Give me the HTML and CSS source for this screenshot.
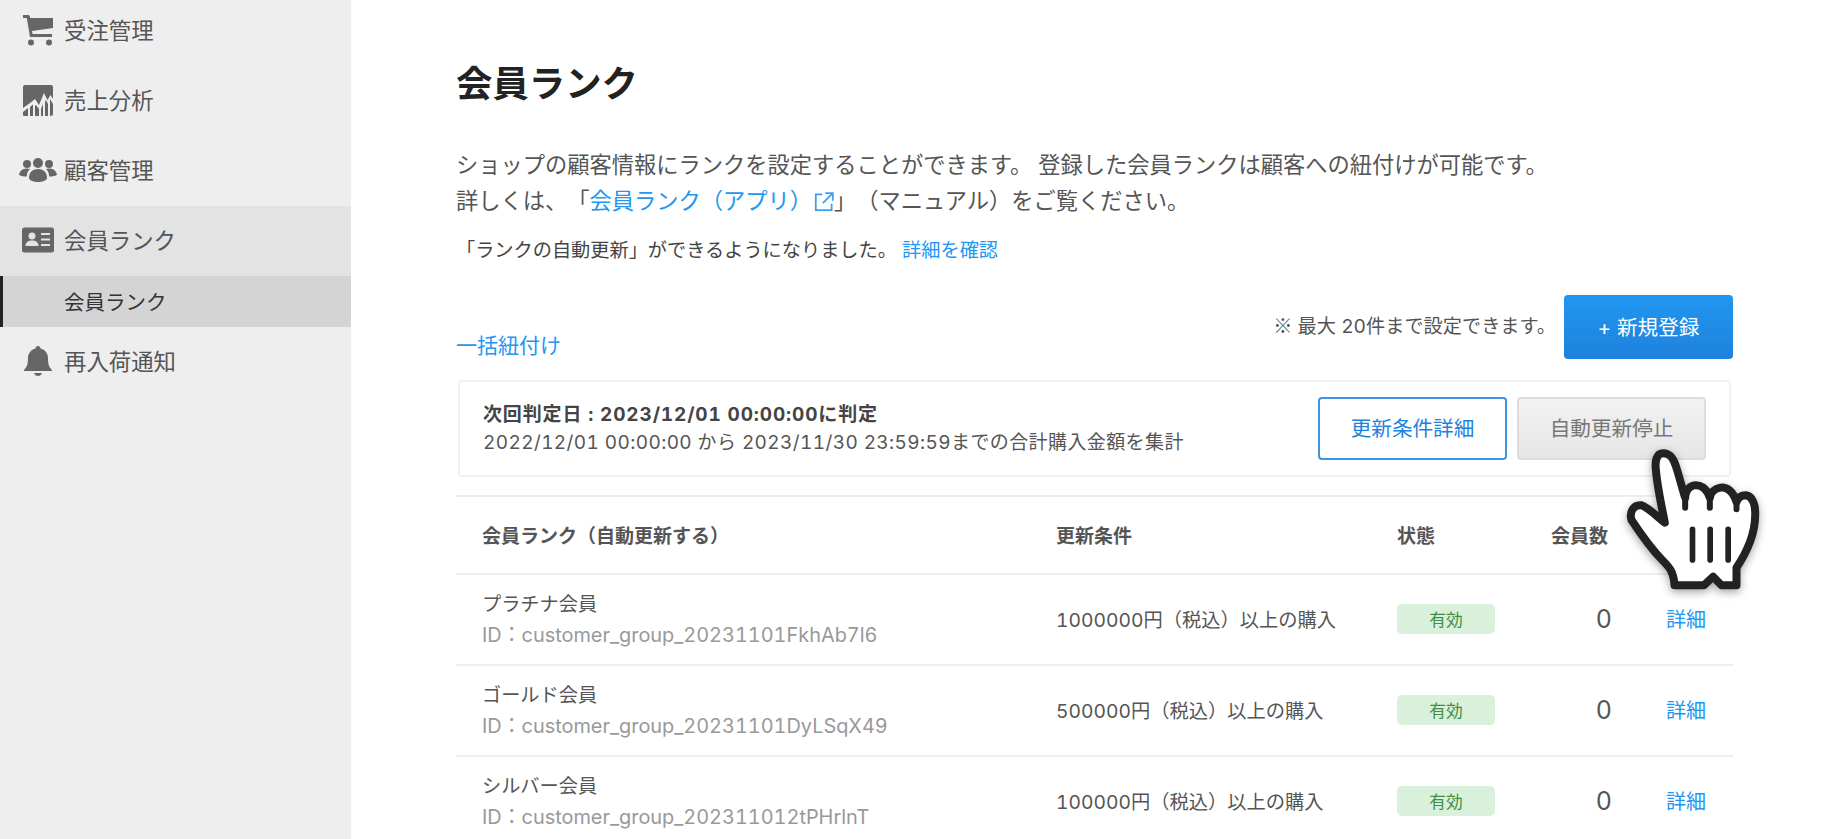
FILE: index.html
```html
<!DOCTYPE html>
<html lang="ja">
<head>
<meta charset="utf-8">
<title>会員ランク</title>
<link rel="stylesheet" href="styles.css">
</head>
<body>
<aside class="sidebar">
  <nav class="nav">
    <a class="nav-item"><span class="nav-icon"><svg width="32" height="32" viewBox="0 0 32 32"><path class="ic" d="M1 1h6l1.500 3H31v10l-21 3 .6 3H30v3H8L4.800 4H1z"/><circle class="ic" cx="9" cy="28.500" r="3"/><circle class="ic" cx="27" cy="28.500" r="3"/></svg></span>受注管理</a>
    <a class="nav-item"><span class="nav-icon"><svg width="32" height="32" viewBox="0 0 32 32"><path class="ic" d="M2 1h27a2 2 0 0 1 2 2v12l-2.500-4-3 5-3.500-7-5 12-4-6-5 4-7 5V3a2 2 0 0 1 2-2z"/><path class="ic" d="M1 28l5-4v8H2a1 1 0 0 1-1-1zM8 23l3-2.500V32H8zM13 22l1-1 3 4v7h-4zM19 25l2-5v12h-2zM23 18l1-2 2 4v12h-3zM28 15l3 5v10a2 2 0 0 1-2 2h-1z"/></svg></span>売上分析</a>
    <a class="nav-item"><span class="nav-icon"><svg width="38" height="24" viewBox="0 0 38 24"><circle class="ic" cx="19" cy="5" r="5"/><circle class="ic" cx="8" cy="6" r="4"/><circle class="ic" cx="30" cy="6" r="4"/><path class="ic" d="M10 20c0-6 4-9 9-9s9 3 9 9c0 2-4 4-9 4s-9-2-9-4z"/><path class="ic" d="M0 16.500c1-4 4-6 8-6 1 0 2 .2 3 .6-2 1.800-3 4-3.200 7.400C4 18.500 1 18 0 16.500zM38 16.500c-1-4-4-6-8-6-1 0-2 .2-3 .6 2 1.800 3 4 3.200 7.400 3.800 0 6.800-.5 7.800-2z"/></svg></span>顧客管理</a>
    <a class="nav-item nav-item-open"><span class="nav-icon"><svg width="32" height="26" viewBox="0 0 32 26"><rect class="ic" width="32" height="25" y="0.500" rx="2.500"/><circle class="cut" cx="10" cy="9" r="3.500"/><path class="cut" d="M3.500 19c0-4 3-5.500 6.500-5.500s6.500 1.500 6.500 5.500z"/><path class="cut" d="M19 6h9v2h-9zM19 11.500h9v2h-9zM19 17h9v2h-9z"/></svg></span>会員ランク</a>
    <a class="nav-sub">会員ランク</a>
    <a class="nav-item"><span class="nav-icon"><svg width="28" height="30" viewBox="0 0 28 30"><path class="ic" d="M14 0c1.400 0 2.500 1 2.500 2.400 4.500 1 7.500 4.800 7.500 9.600 0 6 1 9 4 12v1H0v-1c3-3 4-6 4-12 0-4.800 3-8.600 7.500-9.600C11.500 1 12.600 0 14 0z"/><path class="ic" d="M10 27h8c-.6 2-2.200 3-4 3s-3.400-1-4-3z"/></svg></span>再入荷通知</a>
  </nav>
</aside>
<main class="main">
  <h1 class="title">会員ランク</h1>
  <p class="lead">ショップの顧客情報にランクを設定することができます。 登録した会員ランクは顧客への紐付けが可能です。<br>詳しくは、「<a class="link">会員ランク（アプリ）<svg class="ext" width="20" height="20" viewBox="0 0 17 17"><path d="M7 2H1.500v13.500H15V10M9.500 1H16v6.500M16 1L7.500 9.500" fill="none" stroke="#3d9fef" stroke-width="1.500"/></svg></a>」（マニュアル）をご覧ください。</p>
  <p class="sub-note">「ランクの自動更新」ができるようになりました。 <a class="link">詳細を確認</a></p>
  <div class="toolbar">
    <a class="link bulk">一括紐付け</a>
    <div class="toolbar-right">
      <span class="limit"><span class="mark">※</span> 最大 20件まで設定できます。</span>
      <button class="btn btn-primary">+ 新規登録</button>
    </div>
  </div>
  <section class="notice">
    <div class="notice-text">
      <div class="notice-strong">次回判定日 : 2023/12/01 00:00:00に判定</div>
      <div class="notice-range">2022/12/01 00:00:00 から 2023/11/30 23:59:59までの合計購入金額を集計</div>
    </div>
    <div class="notice-actions">
      <button class="btn btn-outline">更新条件詳細</button>
      <button class="btn btn-muted">自動更新停止</button>
    </div>
  </section>
  <table class="table">
    <colgroup><col class="c1"><col class="c2"><col class="c3"><col class="c4"><col class="c5"></colgroup>
    <thead>
      <tr><th>会員ランク（自動更新する）</th><th>更新条件</th><th>状態</th><th class="num-head">会員数</th><th></th></tr>
    </thead>
    <tbody>
      <tr>
        <td class="rank-cell"><div class="rank">プラチナ会員</div><div class="rank-id">ID：customer_group_20231101FkhAb7l6</div></td>
        <td>1000000円（税込）以上の購入</td>
        <td><span class="badge">有効</span></td>
        <td class="num">0</td>
        <td class="action"><a class="link">詳細</a></td>
      </tr>
      <tr>
        <td class="rank-cell"><div class="rank">ゴールド会員</div><div class="rank-id">ID：customer_group_20231101DyLSqX49</div></td>
        <td>500000円（税込）以上の購入</td>
        <td><span class="badge">有効</span></td>
        <td class="num">0</td>
        <td class="action"><a class="link">詳細</a></td>
      </tr>
      <tr>
        <td class="rank-cell"><div class="rank">シルバー会員</div><div class="rank-id">ID：customer_group_202311012tPHrlnT</div></td>
        <td>100000円（税込）以上の購入</td>
        <td><span class="badge">有効</span></td>
        <td class="num">0</td>
        <td class="action"><a class="link">詳細</a></td>
      </tr>
    </tbody>
  </table>
  <svg class="hand" width="137" height="145" viewBox="1150 500 410 435">
    <path class="hand-shape" d="M1270 522C1250 522 1245 545 1248 570C1252 620 1265 680 1275 730C1250 710 1225 685 1205 678C1180 675 1168 700 1175 722C1200 760 1240 815 1270 845C1290 865 1302 880 1304 918H1392L1420 892L1445 918H1490V865C1520 820 1545 770 1546 710C1548 670 1535 650 1518 648C1505 648 1495 655 1490 668C1480 635 1460 622 1442 625C1425 628 1412 640 1410 655C1400 625 1380 615 1362 618C1345 622 1337 640 1336 655C1325 620 1318 590 1308 560C1300 535 1290 522 1270 522Z"/>
    <path class="hand-line" d="M1336 655V685M1410 655V685M1490 668V690"/>
    <path class="hand-bar" d="M1358 750V842M1411 750V842M1465 750V842"/>
  </svg>
</main>
</body>
</html>
```
FILE: styles.css
```css
* { box-sizing: border-box; }
html, body { margin: 0; height: 100%; overflow: hidden; }
body {
  display: flex;
  background: #fff;
  color: #555;
  font-family: Inter, "Noto Sans CJK JP", sans-serif;
  font-size: 18px;
  font-variant-numeric: tabular-nums;
  text-spacing-trim: space-all;
}
a { text-decoration: none; }

.sidebar { flex: 0 0 351px; background: #eee; height: 100%; }
.nav { margin-top: -4px; display: flex; flex-direction: column; }
.nav-item {
  display: flex; align-items: center;
  height: 70px;
  padding-bottom: 5px;
  font-size: 22.400px;
  color: #555;
}
.nav-item-open { background: #e3e3e3; }
.nav-icon { flex: 0 0 64px; display: flex; justify-content: center; padding-left: 12px; margin-top: 2px; }
.nav-icon svg { flex: none; }
.ic { fill: #666; }
.cut { fill: #e3e3e3; }
.nav-sub {
  display: flex; align-items: center;
  height: 51px;
  padding-left: 61px;
  padding-bottom: 2px;
  border-left: 3px solid #222;
  background: #d4d4d4;
  color: #333;
  font-size: 20.500px;
}

.main { position: relative; flex: 1; padding: 0 105px; min-width: 0; }
.title { margin: 62px 0 0; height: 44px; line-height: 44px; font-size: 36.400px; font-weight: 700; color: #222; }
.lead { margin: 41px 0 0; font-size: 22.250px; line-height: 36px; color: #555; }
.link { color: #2196f3; }
.ext { vertical-align: -3px; margin-left: 2px; }
.sub-note { margin: 19px 0 0; font-size: 19.200px; line-height: 24px; color: #444; }

.toolbar { display: flex; justify-content: space-between; align-items: flex-end; margin-top: 33px; height: 64px; }
.bulk { font-size: 21px; line-height: 28px; margin-bottom: -1px; }
.toolbar-right { display: flex; align-items: center; gap: 8px; height: 64px; }
.limit { font-size: 19.200px; color: #555; margin-top: -4px; }
.mark { font-family: "Noto Sans CJK JP", sans-serif; }

.btn { font-family: inherit; border-radius: 4px; cursor: pointer; padding: 0 0 3px; }
.btn-primary {
  width: 169px; height: 64px;
  border: 0;
  color: #fff; font-size: 20.600px;
  background: linear-gradient(#2196f0, #1e82dc);
}
.notice {
  display: flex; justify-content: space-between; align-items: center;
  width: 1273px; height: 97px;
  margin: 21px 0 0 2px;
  padding: 0 23px 0 23px;
  border: 2px solid #f0f0f0;
  border-radius: 4px;
  font-size: 19px;
  line-height: 28px;
  color: #555;
}
.notice-strong { font-weight: 700; color: #444; letter-spacing: .85px; }
.notice-range { letter-spacing: .4px; }
.notice-actions { display: flex; gap: 10px; }
.btn-outline {
  width: 189px; height: 63px;
  background: #fff; border: 2px solid #3b94e6;
  color: #1e82dc; font-size: 20.600px;
}
.btn-muted {
  width: 189px; height: 63px;
  background: linear-gradient(#f2f2f2, #e6e6e6);
  border: 2px solid #dcdcdc;
  color: #777; font-size: 20.600px;
}

.table { width: 1277px; margin-top: 18px; border-collapse: collapse; table-layout: fixed; }
.c1 { width: 574px; } .c2 { width: 367px; } .c3 { width: 120px; } .c4 { width: 95px; } .c5 { width: 121px; }
.table th {
  height: 78px; padding: 0 0 2px;
  text-align: left;
  font-size: 19px; font-weight: 700; color: #555;
  border-top: 2px solid #eee;
  border-bottom: 2px solid #eee;
}
.table td {
  height: 91px; padding: 0 0 2px;
  font-size: 19.250px; color: #555;
  border-bottom: 2px solid #eee;
}
.table th:nth-child(1), .table td:nth-child(1),
.table th:nth-child(2), .table td:nth-child(2) { padding-left: 26px; }
.table .rank-cell { padding-bottom: 0; }
.rank { font-size: 19.200px; line-height: 30px; color: #555; }
.rank-id { font-size: 19.900px; line-height: 32px; color: #999; white-space: nowrap; }
.badge {
  display: flex; align-items: center; justify-content: center;
  width: 98px; height: 30px;
  border-radius: 5px;
  background: #d9f0da;
  color: #3f8f45;
  font-size: 16.800px;
}
.table .num-head { padding-left: 34px; white-space: nowrap; }
.table .num { font-size: 25px; text-align: right; }
.table .action { padding-left: 54px; font-size: 20px; }

.hand {
  position: absolute;
  left: 1272px; top: 446px;
  filter: drop-shadow(0 3px 4px rgba(0,0,0,.35));
}
.hand-shape { fill: #fff; stroke: #222; stroke-width: 24; stroke-linejoin: round; }
.hand-line { fill: none; stroke: #222; stroke-width: 18; stroke-linecap: round; }
.hand-bar { fill: none; stroke: #222; stroke-width: 17; stroke-linecap: round; }
```
